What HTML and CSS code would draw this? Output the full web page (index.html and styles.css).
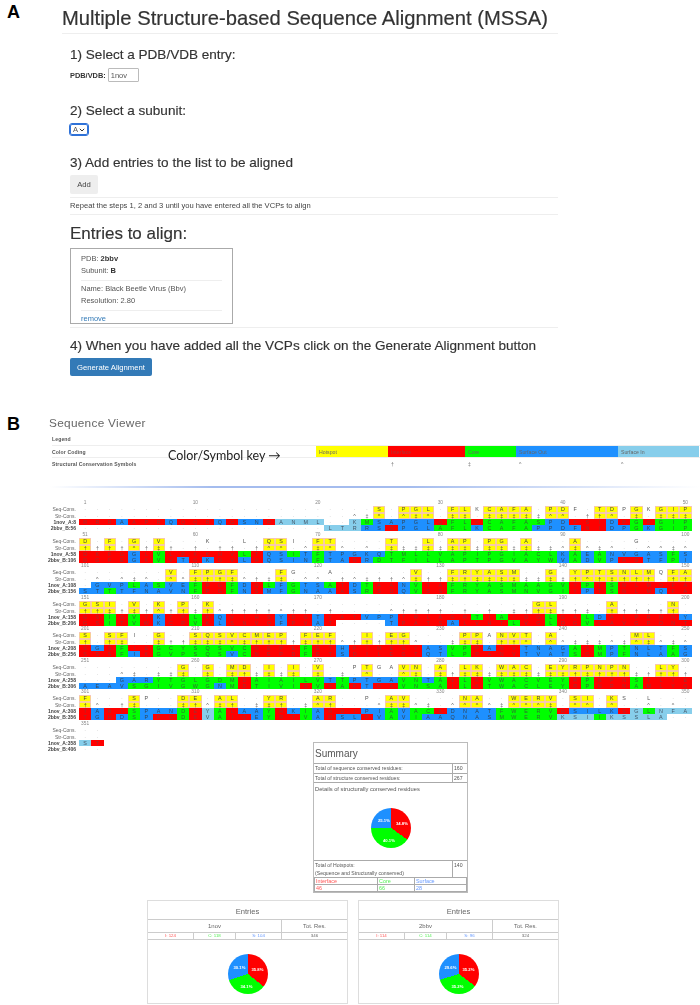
FILE: index.html
```html
<!DOCTYPE html>
<html lang="en">
<head>
<meta charset="utf-8">
<title>MSSA</title>
<link rel="stylesheet" href="styles.css">
</head>
<body>
<div class="figure">
  <span class="panel-label label-a">A</span>
  <section class="panel-a">
    <h1>Multiple Structure-based Sequence Alignment (MSSA)</h1>
    <div class="steps">
      <h2 class="step-1">1) Select a PDB/VDB entry:</h2>
      <div class="pdb-row"><label class="pdb-label" for="pdb">PDB/VDB:</label><input id="pdb" class="pdb-input" type="text" value="1nov"></div>
      <h2 class="step-2">2) Select a subunit:</h2>
      <div class="subunit-wrap">
        <select class="subunit"><option>A</option><option>B</option></select>
        <svg class="chevron" viewBox="0 0 6 4" width="6" height="4"><path d="M.8.8 3 3l2.2-2.2" fill="none" stroke="#333" stroke-width="1"/></svg>
      </div>
      <h2 class="step-3">3) Add entries to the list to be aligned</h2>
      <button class="btn btn-add" type="button">Add</button>
      <hr class="rule rule-a">
      <p class="hint">Repeat the steps 1, 2 and 3 until you have entered all the VCPs to align</p>
      <hr class="rule rule-b">
      <h3 class="entries-title">Entries to align:</h3>
      <div class="entry-card">
        <p class="card-line">PDB: <b>2bbv</b></p>
        <p class="card-line">Subunit: <b>B</b></p>
        <hr class="card-rule">
        <p class="card-line">Name: Black Beetle Virus (Bbv)</p>
        <p class="card-line">Resolution: 2.80</p>
        <hr class="card-rule">
        <a class="card-link" href="#">remove</a>
      </div>
      <hr class="rule rule-c">
      <h2 class="step-4">4) When you have added all the VCPs click on the Generate Alignment button</h2>
      <button class="btn btn-primary" type="button">Generate Alignment</button>
    </div>
  </section>

  <section class="panel-b">
    <span class="panel-label label-b">B</span>
    <h2 class="viewer-title">Sequence Viewer</h2>
    <div class="legend">
      <div class="legend-row"><span class="legend-name">Legend</span></div>
      <div class="legend-row legend-ruled">
        <span class="legend-name">Color Coding</span>
        <div class="key">
          <span class="key-cell key-hot">Hotspot</span>
          <span class="key-cell key-int">Interface</span>
          <span class="key-cell key-core">Core</span>
          <span class="key-cell key-out">Surface Out</span>
          <span class="key-cell key-in">Surface In</span>
        </div>
      </div>
      <div class="legend-row legend-ruled">
        <span class="legend-name">Structural Conservation Symbols</span>
        <div class="key">
          <span class="key-cell key-w-hot"></span>
          <span class="key-cell key-w-int">†</span>
          <span class="key-cell key-w-core">‡</span>
          <span class="key-cell key-w-out">^</span>
          <span class="key-cell key-w-in">^</span>
        </div>
      </div>
      <span class="annotation">Color/Symbol key →</span>
    </div>
    <div class="fade-line"></div>
    <div id="alignment" class="alignment"></div>

    <div class="summary">
      <div class="summary-title">Summary</div>
      <div class="summary-row"><span class="summary-text">Total of sequence conserved residues:</span><span class="summary-num">160</span></div>
      <div class="summary-row"><span class="summary-text">Total of structure conserved residues:</span><span class="summary-num">267</span></div>
      <div class="summary-chart">
        <div class="summary-details">Details of structurally conserved residues</div>
        <div class="pie pie-summary"><span class="pie-label pl-1">34.8%</span><span class="pie-label pl-2">40.1%</span><span class="pie-label pl-3">25.1%</span></div>
      </div>
      <div class="summary-row summary-hot"><span class="summary-text">Total of Hotspots:<br>(Sequence and Structurally conserved)</span><span class="summary-num">140</span></div>
      <div class="hot-grid">
        <span class="hot-cell c-int">Interface</span><span class="hot-cell c-core">Core</span><span class="hot-cell c-surf">Surface</span>
        <span class="hot-cell c-int">46</span><span class="hot-cell c-core">66</span><span class="hot-cell c-surf">28</span>
      </div>
    </div>

    <div class="entries">
      <div class="entry-table">
        <div class="et-title">Entries</div>
        <div class="et-name">1nov</div><div class="et-total">Tot. Res.</div>
        <div class="et-sub c-int">I: 124</div><div class="et-sub c-core">C: 118</div><div class="et-sub c-surf">S: 104</div><div class="et-sub et-count">346</div>
        <div class="et-chart"><div class="pie pie-1nov"><span class="pie-label pl-a">35.8%</span><span class="pie-label pl-b">34.1%</span><span class="pie-label pl-c">30.1%</span></div></div>
      </div>
      <div class="entry-table">
        <div class="et-title">Entries</div>
        <div class="et-name">2bbv</div><div class="et-total">Tot. Res.</div>
        <div class="et-sub c-int">I: 114</div><div class="et-sub c-core">C: 114</div><div class="et-sub c-surf">S: 96</div><div class="et-sub et-count">324</div>
        <div class="et-chart"><div class="pie pie-2bbv"><span class="pie-label pl-a">35.2%</span><span class="pie-label pl-b">35.2%</span><span class="pie-label pl-c">29.6%</span></div></div>
      </div>
    </div>
  </section>
</div>
<script src="app.js"></script>
</body>
</html>
```
FILE: styles.css
```css
* { box-sizing: border-box; }
html, body { margin: 0; padding: 0; background: #fff; }
body { width: 700px; height: 1005px; overflow: hidden; font-family: "Liberation Sans", Arial, sans-serif; color: #333; }
.figure { position: relative; width: 700px; height: 1005px; overflow: hidden; }
.panel-label { position: absolute; left: 7px; font-size: 18px; line-height: 20px; font-weight: 700; color: #000; }
.label-a { top: 2px; }
.label-b { top: 414px; }

.panel-a { padding: 0 142px 0 62px; filter: blur(.35px); }
h1 { margin: 0; padding: 6px 0 3px; font-size: 20.2px; line-height: 24px; font-weight: 400; color: #333; -webkit-text-stroke: .2px #333; border-bottom: 1px solid #eee; white-space: nowrap; }
.steps { margin-left: 8px; }
h2 { margin: 0; font-size: 13.55px; line-height: 16px; font-weight: 400; color: #333; -webkit-text-stroke: .15px #333; white-space: nowrap; }
.step-1 { margin-top: 13px; }
.pdb-row { margin-top: 5px; height: 14px; display: flex; align-items: center; gap: 2px; }
.pdb-label { font-size: 7.4px; font-weight: 700; }
.pdb-input { width: 31px; height: 14px; padding: 0 2px; font: 7.5px "Liberation Sans", sans-serif; color: #555; border: 1px solid #bbb; border-radius: 1px; }
.step-2 { margin-top: 21px; }
.subunit-wrap { position: relative; margin-top: 5px; width: 18px; height: 11px; }
.subunit { display: block; appearance: none; -webkit-appearance: none; width: 18px; height: 11px; padding: 0 0 0 2px; font: 7.5px "Liberation Sans", sans-serif; color: #555; background: #fff; border: 1px solid #2f72d8; border-radius: 2px; outline: .5px solid #2f72d8; }
.chevron { position: absolute; right: 3px; top: 4px; pointer-events: none; }
.step-3 { margin-top: 20px; }
.btn { display: block; padding: 0; border: 0; border-radius: 2px; font: 7.7px "Liberation Sans", sans-serif; }
.btn-add { margin-top: 4px; width: 28px; height: 19px; background: #eee; color: #444; }
.rule { margin: 0; border: 0; border-top: 1px solid #eee; }
.rule-a { margin-top: 3px; }
.hint { margin: 3px 0 0; font-size: 7.6px; line-height: 10px; color: #444; white-space: nowrap; }
.rule-b { margin-top: 3px; }
.entries-title { margin: 8px 0 0; font-size: 17px; line-height: 22px; font-weight: 400; color: #333; -webkit-text-stroke: .15px #333; }
.entry-card { margin-top: 3px; width: 163px; height: 76px; padding: 4px 10px 0; border: 1.5px solid #aaa; overflow: hidden; }
.card-line { margin: 0; font-size: 7.5px; line-height: 12px; color: #555; white-space: nowrap; }
.card-line b { color: #333; }
.card-rule { margin: 3px 0 2px; border: 0; border-top: 1px solid #eee; }
.card-link { display: block; font-size: 7.5px; line-height: 12px; color: #337ab7; text-decoration: none; }
.rule-c { margin-top: 3px; }
.step-4 { margin-top: 10px; }
.btn-primary { margin-top: 4px; width: 82px; height: 18px; background: #337ab7; color: #fff; }

.viewer-title { margin: 39px 0 0 49px; font-size: 11.8px; font-weight: 400; letter-spacing: .3px; color: #666; -webkit-text-stroke: 0; filter: blur(.3px); }
.legend { position: relative; margin-top: 2px; padding-left: 52px; color: #555; filter: blur(.35px); }
.legend-row { display: flex; height: 12px; align-items: center; }
.legend-ruled { border-top: 1px solid #eee; }
.legend-name { width: 264px; flex: none; font-size: 5.1px; font-weight: 700; letter-spacing: .12px; color: #555; }
.key { display: flex; height: 100%; }
.key-cell { display: flex; align-items: center; padding-left: 3px; font-size: 5.2px; color: #666; }
.key-hot, .key-w-hot { width: 72px; }
.key-int, .key-w-int { width: 77px; }
.key-core, .key-w-core { width: 51px; }
.key-out, .key-w-out { width: 102px; }
.key-in, .key-w-in { width: 81px; }
.key-hot { background: #ff0; }
.key-int { background: #f00; color: #a33; }
.key-core { background: #0f0; }
.key-out { background: #1e90ff; }
.key-in { background: #87ceeb; }
.annotation { position: absolute; left: 168px; top: 15px; font-family: Lato, sans-serif; font-size: 12.5px; line-height: 16px; color: #222; white-space: nowrap; }
.fade-line { margin: 17px 0 0 50px; height: 1.5px; background: linear-gradient(90deg, rgba(160,185,235,0), #a4bcee 25%, #a4bcee 55%, rgba(160,185,235,0)); }

.alignment { margin-top: 12.5px; height: 242px; filter: blur(.45px); }
.row { display: grid; grid-template-columns: 79px repeat(50, 12.25px); height: 6px; font-size: 5.4px; line-height: 6px; color: #555; text-align: center; }
.row-seq { height: 7px; line-height: 7px; }
.block:nth-child(even) .row-ruler { height: 7px; line-height: 7px; }
.row-label { padding-right: 3px; text-align: right; font-size: 5px; color: #666; white-space: nowrap; }
.row-id .row-label { font-weight: 700; color: #444; }
.num { font-size: 4.8px; color: #888; white-space: nowrap; }
.dot { color: #aaa; }
.box { background: #ff0; box-shadow: inset 0 0 0 .7px #f6bcd4; color: #444; }
.r { background: #f00; color: #933; }
.b { background: #1e90ff; color: #345; }
.g { background: #0f0; color: #363; }
.l { background: #87ceeb; color: #456; }

.summary { position: relative; margin-left: 313px; width: 155px; height: 151px; border: 1.5px solid #bbb; display: flex; flex-direction: column; color: #555; filter: blur(.35px); }
.summary-title { height: 20px; padding-left: 1px; font-size: 10px; line-height: 22px; color: #555; }
.summary-row { display: flex; height: 9.5px; border-top: 1px solid #aaa; font-size: 5.15px; line-height: 8px; }
.summary-text { flex: 1; padding-left: 1px; }
.summary-num { width: 15px; padding-left: 1px; border-left: 1px solid #aaa; }
.summary-chart { height: 78px; border-top: 1px solid #aaa; }
.summary-details { padding: 2px 0 0 1px; font-size: 5.75px; line-height: 8px; }
.summary-chart .pie { margin: 15px 0 0 57px; }
.summary-hot { height: 17px; line-height: 8px; }
.hot-grid { flex: 1; display: grid; grid-template-columns: 62px 36px 1fr; gap: 1px; padding: 1px; background: #aaa; font-size: 5.4px; line-height: 6px; }
.hot-cell { background: #fff; padding-left: 1px; }
.c-int { color: #f55; }
.c-core { color: #5e5; }
.c-surf { color: #69f; }

.entries { display: flex; gap: 10px; margin: 7px 0 0 147px; }
.entry-table { width: 201px; height: 104px; display: grid; grid-template-columns: 46px 42px 46px 1fr; grid-template-rows: 19px 13px 7px 1fr; border: 1.5px solid #ddd; color: #666; text-align: center; filter: blur(.35px); }
.et-title { grid-column: 1 / -1; font-size: 7.6px; line-height: 21px; border-bottom: 1px solid #ccc; }
.et-name { grid-column: 1 / 4; font-size: 6px; line-height: 13px; border-bottom: 1px solid #ccc; border-right: 1px solid #ccc; }
.et-total { font-size: 5.8px; line-height: 13px; border-bottom: 1px solid #ccc; }
.et-sub { font-size: 4.4px; line-height: 6px; border-bottom: 1.5px solid #ccc; border-right: 1px solid #ccc; }
.et-count { border-right: 0; color: #666; }
.et-chart { grid-column: 1 / -1; padding-top: 14px; }
.et-chart .pie { margin: 0 auto; }

.pie { position: relative; width: 40px; height: 40px; border-radius: 50%; }
.pie-summary { background: conic-gradient(#f00 0 34.8%, #0f0 0 74.9%, #1e90ff 0); }
.pie-1nov { background: conic-gradient(#f00 0 35.8%, #0f0 0 69.9%, #1e90ff 0); }
.pie-2bbv { background: conic-gradient(#f00 0 35.2%, #0f0 0 70.4%, #1e90ff 0); }
.pie-label { position: absolute; font-size: 4.2px; line-height: 5px; font-weight: 700; color: #fff; white-space: nowrap; }
.pl-1 { left: 25px; top: 12.5px; }
.pl-2 { left: 12px; top: 30px; }
.pl-3 { left: 7px; top: 9.5px; }
.pl-a { left: 24px; top: 12.5px; }
.pl-b { left: 13px; top: 29.5px; }
.pl-c { left: 6px; top: 11px; }
```
FILE: app.js
```js
var D = function (n) { return '.'.repeat(n); };
var BLOCKS = [
  { seq: D(24) + 'S.PGL.FLkCAFA.PDf.TDpGkGIP',
    str: D(22) + '^d^.^d^.dd.ddddd^^.tt^.d.ddd',
    a: 'RRRAAPRQQQRQGSNRANML..KMSAPGLQFLKCAFASPDFSIDPGRGIP',
    ac: '3r b 3r b 3r b r 2b r 4l 2n l g 5b r 2g r 5g 2b 3r b r g r 3g',
    b: D(20) + 'LTRRSDPGLAFLKCAFAPPDFNIDPGKGIP',
    bc: '20n 2l l b b r 3b 3g b 4g 3b b 2r 2b g b 3g' },
  { seq: 'D.F.G.V...k..l.QSi.FT....T..L.AP.PG.A...A....g....',
    str: 'tttt^tdt.t.tt.t^^.^d^^.^.' + 'd'.repeat(14) + '^d^d^..^^d^',
    a: 'DKFGGLVLPKKHVLTQSITFTPGKQTMLLVAPIPGIACLKAEANVGASFS',
    ac: '4r b r g 6r g r 2b g b g 2b 3b 14g b g b g 5b g b',
    b: 'DGFEGKVVTGKDVLHQSINFTANRDTFILLAPTPGVAYWVADVPAGTFPI',
    bc: '4r b r g r b r b 2r b r 4b g 2b r b 15g b g b g b 2r 2b g b' },
  { seq: '.......V.FPGF...Fg..a......V..FRYASM..G.YPTSNLMqFA',
    str: '.^.^d^.^^dttd^tdd.^^.t^dtt^dttdt' + 'dddddddd' + 't^tdttt.tt',
    a: '.GVPLASVEFPGFDQLFGTSATDTAANVTAFRYASMAAGVYPTSNLMQFA',
    ac: 'n 3b g b g 2b g 2r g b r g b g 2b g r b g 2r b g 2r 10g r g r g 6r',
    b: 'STTTFNAVNFPGFNSMFGNAAASRSDQVSSFRYASMNVGIYPTSNLMQFA',
    bc: '2b g 6b g 2r g b r 2b g 3b r b g 2r b g 2r 10g r b r g 3r b 2r' },
  { seq: 'GSI.V.K.P.K' + D(26) + 'GL....A....N.',
    str: 'ttdtdt^ttdt^tttt^tt.t....' + '^tttt.t.t.dttdttd.' + 'tttttt.',
    a: 'GSIGVYKTPLKQVIHSYDGTYATVPPTRLAGRTIAIDGLGALDALPRNNY',
    ac: '2r g r g r b 2r g r b 4r b 2r b 2r r 3b 6r g r g 3r g 2r g b 6r b',
    b: 'GSITVWKCPVKLSNVQFPVAT....TPATSALVHTLVGLDGVLAVGPONT',
    bc: '2r g r g r b 2r g r b 4r b 2r b r n 3n b 4r b 4r g 2r g 2r g 8r' },
  { seq: 'S.SFi.G..SQSVCMEP.FEF..I.EG....PPaNVT.A......ML...',
    str: 't.td..dttddd^dttttdtt^' + 'ttttt^..ddd.tt^.^^ddd^d^d^d^',
    a: 'SGSFIEGCYSQSVCNEPEFETHPIMEGYASVPPANVTNAGASMPTNLTFS',
    ac: 'r b r g 2r 8g 4r g 2r b 6r 2b 2g r b 2r 4b g r g b g 3b g b',
    b: 'SSSFIKGVPSQSVCNEPDFETSDILEGTQTLPPANVTVATSGMPFNLAAG',
    bc: '3r g b r 6g b g 4r g 2r b 6r 2b 2g 4r 4b g r g b g 3b g b' },
  { seq: '........G.G.MD.I.I.V..pTgaVN.A.LK.WAC.EYRPNPN..LY.',
    str: '...^d.ddd.d.dtdddd.d.d' + '.^..^d.dt' + 'ddddddddd' + 'tdtttdtttt',
    a: '...GARYTGLGDMDAIAILVTTPTGAVNTAVLKVWACVEYRPNPNSTLYE',
    ac: '3n 3b 7g r 6g b g 4b 2g b g r g r 7g r g 3r g 4r',
    b: 'AEAVSGIVGWGNMDTIVIRVSAPTGAVNSAILKTWACLEYRPNPNAMLYQ',
    bc: '4b 7g b g r 4g r g r g r b 2r 4g r g r 7g r g 3r g 4r' },
  { seq: 'F...Sp..DE.AL..YR..AR..p.AV....NA..WERV.SI.Ks.l...',
    str: 't^.td...dt^dt.ddt.d^t.' + '..^dd^d.^^^^d^^^d.^^.^..^.^.',
    a: 'TARTSPANDEYALAAYRKIARDIPIAVACKDNATFWERVRSILKSGLNFA',
    ac: 'r b 2r g 3b g r l g r 2b g r b g b 2r r 2b g b 2g r 4b 5g r 4b r l g 3l',
    b: 'TGHDSPPCDEVAIQEYRTVARSLPVAVIAAQNASMWERVKSIIKSSLA..',
    bc: 'r b r b g b 2r g r l g 2r b g 2r g b r b b r b g b g 6b 5g 3l g 5l 2n' },
  { seq: '..', str: '..', a: 'ST', ac: 'l r', b: '..', bc: '2n' }
];
var SYMBOL = { t: '†', d: '‡', '^': '^', '.': '·' };
var A_START = [8, 58, 108, 158, 208, 258, 308, 358];
var B_START = [56, 106, 156, 206, 256, 306, 356, 406];

function colours(rle) {
  var out = [];
  rle.split(' ').forEach(function (t) {
    var m = t.match(/^(\d*)([rbgln])$/);
    var n = m[1] ? parseInt(m[1], 10) : 1;
    for (var i = 0; i < n; i++) { out.push(m[2]); }
  });
  return out;
}
function cell(row, text, cls) {
  var s = document.createElement('span');
  s.textContent = text;
  if (cls) { s.className = cls; }
  row.appendChild(s);
}
function makeRow(block, label, cls) {
  var r = document.createElement('div');
  r.className = 'row ' + cls;
  cell(r, label, 'row-label');
  block.appendChild(r);
  return r;
}
var host = document.getElementById('alignment');
BLOCKS.forEach(function (bl, i) {
  var block = document.createElement('div');
  block.className = 'block';
  var len = bl.seq.length;
  var ruler = makeRow(block, '', 'row-ruler');
  for (var c = 0; c < len; c++) {
    var label = '';
    if (c === 0) { label = String(i * 50 + 1); }
    else if ((c + 1) % 10 === 0) { label = String(i * 50 + c + 1); }
    cell(ruler, label, 'num');
  }
  var seq = makeRow(block, 'Seq-Cons.', 'row-seq');
  var str = makeRow(block, 'Str-Cons.', 'row-str');
  var ra = makeRow(block, '1nov_A:' + A_START[i], 'row-id');
  var rb = makeRow(block, '2bbv_B:' + B_START[i], 'row-id');
  var ca = colours(bl.ac);
  var cb = colours(bl.bc);
  for (var k = 0; k < len; k++) {
    var s = bl.seq.charAt(k);
    var boxed = s !== '.' && s === s.toUpperCase();
    var sy = bl.str.charAt(k);
    cell(seq, s === '.' ? '·' : s.toUpperCase(), boxed ? 'box' : (s === '.' ? 'dot' : ''));
    cell(str, SYMBOL[sy] || '·', boxed ? 'box' : (sy === '.' ? 'dot' : ''));
    var la = bl.a.charAt(k);
    var lb = bl.b.charAt(k);
    cell(ra, la === '.' ? '·' : la, ca[k] === 'n' ? 'dot' : ca[k]);
    cell(rb, lb === '.' ? '·' : lb, cb[k] === 'n' ? 'dot' : cb[k]);
  }
  host.appendChild(block);
});
```
